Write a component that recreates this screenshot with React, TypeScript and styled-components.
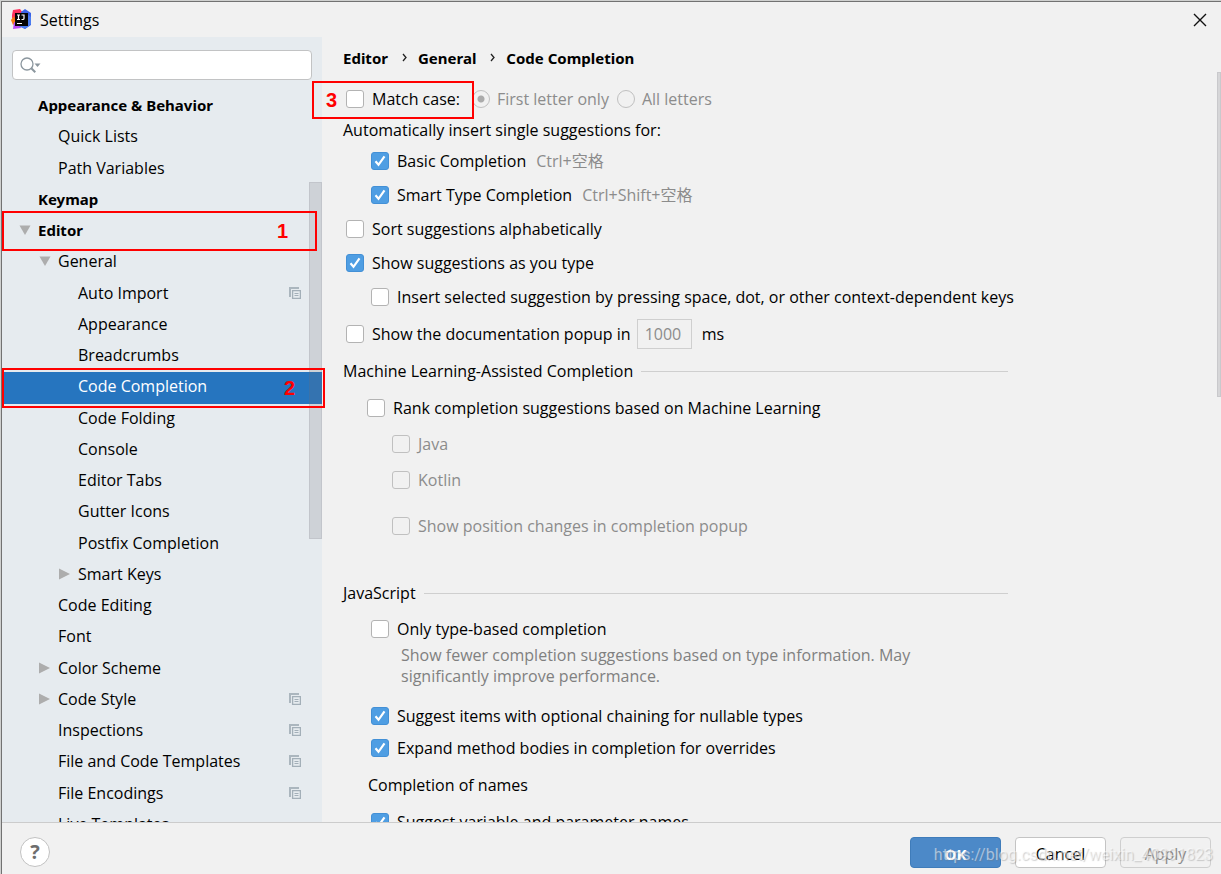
import React, { useId, useState } from "react";
import styled, { createGlobalStyle, css } from "styled-components";

const GlobalStyle = createGlobalStyle`
  * { box-sizing: border-box; }
  body {
    margin: 0;
    background: #cfd0cf;
    color: #000;
    font-family: "Open Sans", "Noto Sans CJK SC", sans-serif;
    font-size: 16px;
    line-height: 20px;
  }
  button, input { font: inherit; color: inherit; }
`;

const strongText = css`
  font-family: "Noto Sans", sans-serif;
  font-size: 15px;
  font-weight: 700;
`;

/* ---------- Window frame ---------- */

const Desktop = styled.div`
  height: 100vh;
  padding: 1px 0 0 1px;
`;

const Window = styled.div`
  position: relative;
  display: flex;
  flex-direction: column;
  height: 100%;
  overflow: hidden;
  border-top: 1px solid #727272;
  border-left: 1px solid #727272;
  background: #f1f1f1;
`;

const TitleBar = styled.header`
  display: flex;
  align-items: center;
  flex: none;
  gap: 8px;
  height: 35px;
  padding: 0 14px 0 9px;
`;

const WindowTitle = styled.h1`
  flex: 1;
  margin: 0;
  font-size: 16px;
  font-weight: 400;
`;

const CloseButton = styled.button`
  display: flex;
  padding: 0;
  border: 0;
  background: none;
`;

const Body = styled.div`
  display: flex;
  flex: 1;
  min-height: 0;
`;

/* ---------- Sidebar ---------- */

const Sidebar = styled.nav`
  position: relative;
  flex: none;
  width: 320px;
  overflow: hidden;
  background: #e6ebef;
`;

const SearchField = styled.label`
  display: flex;
  align-items: center;
  gap: 4px;
  height: 30px;
  margin: 13px 10px 11px;
  padding-left: 7px;
  border: 1px solid #c2c3c4;
  border-radius: 4px;
  background: #fff;
`;

const SearchInput = styled.input`
  flex: 1;
  min-width: 0;
  padding: 0;
  border: 0;
  outline: 0;
  background: none;
`;

const Tree = styled.ul`
  margin: 0;
  padding: 0;
  list-style: none;
`;

const TreeRow = styled.li`
  height: 31px;
  &:nth-child(4n + 2) { height: 32px; }
`;

const TreeButton = styled.button<{ $depth: number; $bold?: boolean; $selected?: boolean }>`
  display: flex;
  align-items: center;
  width: 100%;
  height: 100%;
  padding: 0 21px 4px ${(p) => 17 + p.$depth * 20}px;
  border: 0;
  text-align: left;
  white-space: nowrap;
  background: ${(p) => (p.$selected ? "#2675bf" : "none")};
  color: ${(p) => (p.$selected ? "#fff" : "#000")};
  ${(p) => p.$bold && strongText}
`;

const ArrowSlot = styled.span`
  display: flex;
  flex: none;
  width: 19px;
`;

const TreeLabel = styled.span`
  flex: 1;
`;

const ScrollThumb = styled.div<{ $top: number; $height: number; $width: number }>`
  position: absolute;
  top: ${(p) => p.$top}px;
  right: 0;
  width: ${(p) => p.$width}px;
  height: ${(p) => p.$height}px;
  border: 1px solid rgba(110, 110, 120, 0.12);
  background: rgba(110, 110, 120, 0.2);
`;

/* ---------- Settings page ---------- */

const Page = styled.main`
  position: relative;
  flex: 1;
  min-width: 0;
  overflow: hidden;
  padding-left: 21px;
`;

const Breadcrumbs = styled.ol`
  display: flex;
  align-items: center;
  gap: 10px;
  height: 42px;
  margin: 0 0 3px;
  padding: 0;
  list-style: none;
  ${strongText}
`;

const Crumb = styled.li`
  display: flex;
  align-items: center;
  gap: 14px;
`;

const Form = styled.form`
  max-width: 665px;
`;

const Row = styled.div<{ $indent?: number; $height?: number }>`
  display: flex;
  align-items: center;
  height: ${(p) => p.$height ?? 34}px;
  padding-left: ${(p) => p.$indent ?? 0}px;
  white-space: nowrap;
`;

const Stack = styled.div<{ $indent?: number; $before?: number }>`
  padding-left: ${(p) => p.$indent ?? 0}px;
  padding-top: ${(p) => p.$before ?? 0}px;
`;

const SectionTitle = styled.h2`
  display: flex;
  align-items: center;
  gap: 8px;
  height: 34px;
  margin: 0;
  font-size: 16px;
  font-weight: 400;
  &::after {
    content: "";
    flex: 1;
    height: 1px;
    background: #cfcfcf;
  }
`;

const ChoiceLabel = styled.label<{ $disabled?: boolean }>`
  display: flex;
  align-items: center;
  gap: 8px;
  color: ${(p) => (p.$disabled ? "#8c8c8c" : "#000")};
`;

const BoxFrame = styled.span`
  position: relative;
  display: flex;
  flex: none;
  width: 18px;
  height: 18px;
`;

const boxBase = css`
  appearance: none;
  width: 18px;
  height: 18px;
  margin: 0;
  border: 1px solid #b3b3b3;
`;

const Box = styled.input`
  ${boxBase}
  border-radius: 3px;
  background: #fff;
  &:checked { border-color: #4390d6; background: #4f9ee3; }
  &:disabled { border-color: #c0c0c0; background: #f1f1f1; }
`;

const Tick = styled.svg`
  position: absolute;
  inset: 0;
  pointer-events: none;
`;

const Radio = styled.input`
  ${boxBase}
  border-color: #c0c0c0;
  border-radius: 50%;
  background: #f1f1f1;
  &:checked { background: radial-gradient(circle, #ababab 3px, #f1f1f1 4px); }
`;

const RadioGroup = styled.div`
  display: flex;
  gap: 8px;
  margin-left: 12px;
`;

const RadioLabel = styled(ChoiceLabel)`
  gap: 7px;
`;

const Shortcut = styled.kbd`
  margin-left: 10px;
  color: #8c8c8c;
  font-family: inherit;
`;

const DelayInput = styled.input`
  width: 55px;
  height: 30px;
  margin: 0 10px 0 6px;
  padding: 0 7px;
  border: 1px solid #cfcfcf;
  background: #f1f1f1;
  color: #8c8c8c;
`;

const Hint = styled.p`
  max-width: 560px;
  margin: 0 0 13px;
  padding-left: 30px;
  color: #808080;
  line-height: 21px;
`;

/* ---------- Footer ---------- */

const Footer = styled.footer`
  display: flex;
  align-items: flex-start;
  flex: none;
  gap: 14px;
  height: 52px;
  padding: 14px 10px 0 18px;
  border-top: 1px solid #cccccc;
`;

const HelpButton = styled.button`
  width: 30px;
  height: 30px;
  margin-right: auto;
  padding: 0;
  border: 1px solid #c2c2c2;
  border-radius: 50%;
  background: #fff;
  color: #6e6e6e;
  font-size: 20px;
  font-weight: 700;
`;

const DialogButton = styled.button<{ $primary?: boolean }>`
  width: 91px;
  height: 31px;
  padding: 2px 0 0;
  border: 1px solid #c4c4c4;
  border-radius: 4px;
  background: #fff;
  &:disabled { background: #f1f1f1; color: #8c8c8c; border-color: #cfcfcf; }
  ${(p) => p.$primary && css`
    ${strongText}
    border-color: #3f7cba;
    background: #4c89c8;
    color: #fff;
  `}
`;

/* ---------- Annotations over the window ---------- */

const Callout = styled.div<{ $x: number; $y: number; $w: number; $h: number; $pad: string; $end?: boolean }>`
  position: absolute;
  left: ${(p) => p.$x}px;
  top: ${(p) => p.$y}px;
  width: ${(p) => p.$w}px;
  height: ${(p) => p.$h}px;
  display: flex;
  align-items: center;
  justify-content: ${(p) => (p.$end ? "flex-end" : "flex-start")};
  padding: ${(p) => p.$pad};
  border: 2px solid #ff0000;
  color: #ff0000;
  font: 700 20px/24px "Liberation Sans", sans-serif;
  pointer-events: none;
`;

const Watermark = styled.div`
  position: absolute;
  right: 8px;
  bottom: 9px;
  color: rgba(255, 255, 255, 0.5);
  font: 16px/20px Roboto, sans-serif;
  text-shadow: 1px 1px 1px rgba(120, 120, 120, 0.35);
  pointer-events: none;
`;

/* ---------- Icons ---------- */

const Logo = () => (
  <svg width="21" height="21" viewBox="0 0 21 21" aria-hidden="true">
    <path d="M1 6 2 1l7-1 3 4-8 8-3-3z" fill="#fe315d" />
    <path d="m0 11 3-4 2 7-3 2z" fill="#f97a12" />
    <path d="m3 13 6 3 1 3-8 1z" fill="#b74af7" />
    <path d="m10 3 4-3 6 4v12l-6 4-6-3z" fill="#3b63e8" />
    <path d="m16 5 4 3v7l-6 5-6-3 7-4z" fill="#4a7df0" />
    <path d="M4 4h13v13H4z" fill="#050505" />
    <path d="M6 6h3M7.500 6v4.500M6 10.500h3M10.500 6H13v3.500q0 1-1.200 1H10.500" fill="none" stroke="#fff" strokeWidth="1.200" />
    <path d="M6 14.500h5" stroke="#fff" strokeWidth="1" />
  </svg>
);

const CloseIcon = () => (
  <svg width="14" height="14" viewBox="0 0 14 14" aria-hidden="true">
    <path d="m1 1 12 12M13 1 1 13" stroke="#111" strokeWidth="1.400" />
  </svg>
);

const SearchIcon = () => (
  <svg width="21" height="18" viewBox="0 0 21 18" aria-hidden="true">
    <circle cx="7" cy="8" r="6" fill="none" stroke="#8b969e" strokeWidth="1.300" />
    <path d="m11.300 12.300 4 4" stroke="#8b969e" strokeWidth="2" />
    <path d="M14.500 7.500h6l-3 3.500z" fill="#8b969e" />
  </svg>
);

const Arrow = ({ open }: { open: boolean }) => (
  <svg width="12" height="12" viewBox="0 0 12 12" aria-hidden="true">
    <path d={open ? "M.5 1.500h11L6 11z" : "M0 .5v11L11 6z"} fill="#adadad" />
  </svg>
);

const ProjectIcon = () => (
  <svg width="12" height="12" viewBox="0 0 12 12" aria-hidden="true">
    <path d="M0 0h10v2H2v8H0z" fill="#abb6be" />
    <path d="M3.600 3.600h7.800v7.800H3.600z" fill="#e6ebef" stroke="#a3afb8" strokeWidth="1.300" />
    <path d="M5.500 6.500h4M5.500 8.500h4" stroke="#a3afb8" />
  </svg>
);

const Chevron = () => (
  <svg width="6" height="10" viewBox="0 0 6 10" aria-hidden="true">
    <path d="m1 1 3 3.500L1 8" fill="none" stroke="#222" strokeWidth="1.300" />
  </svg>
);

/* ---------- Controls ---------- */

type CheckProps = { label: string; checked?: boolean; disabled?: boolean };

const Check = ({ label, checked = false, disabled }: CheckProps) => {
  const id = useId();
  const [on, setOn] = useState(checked);
  return (
    <ChoiceLabel htmlFor={id} $disabled={disabled}>
      <BoxFrame>
        <Box id={id} type="checkbox" checked={on} disabled={disabled} onChange={() => setOn(!on)} />
        {on && (
          <Tick viewBox="0 0 18 18" aria-hidden="true">
            <path d="m4.500 9.300 3 3.500 6-8.500" fill="none" stroke="#fff" strokeWidth="2.200" />
          </Tick>
        )}
      </BoxFrame>
      {label}
    </ChoiceLabel>
  );
};

type Node = { label: string; depth: number; bold?: boolean; open?: boolean; project?: boolean; selected?: boolean };

const nodes: Node[] = [
  { label: "Appearance & Behavior", depth: 0, bold: true },
  { label: "Quick Lists", depth: 1 },
  { label: "Path Variables", depth: 1 },
  { label: "Keymap", depth: 0, bold: true },
  { label: "Editor", depth: 0, bold: true, open: true },
  { label: "General", depth: 1, open: true },
  { label: "Auto Import", depth: 2, project: true },
  { label: "Appearance", depth: 2 },
  { label: "Breadcrumbs", depth: 2 },
  { label: "Code Completion", depth: 2, selected: true },
  { label: "Code Folding", depth: 2 },
  { label: "Console", depth: 2 },
  { label: "Editor Tabs", depth: 2 },
  { label: "Gutter Icons", depth: 2 },
  { label: "Postfix Completion", depth: 2 },
  { label: "Smart Keys", depth: 2, open: false },
  { label: "Code Editing", depth: 1 },
  { label: "Font", depth: 1 },
  { label: "Color Scheme", depth: 1, open: false },
  { label: "Code Style", depth: 1, open: false, project: true },
  { label: "Inspections", depth: 1, project: true },
  { label: "File and Code Templates", depth: 1, project: true },
  { label: "File Encodings", depth: 1, project: true },
  { label: "Live Templates", depth: 1 },
];

export default function App() {
  return (
    <Desktop>
      <GlobalStyle />
      <Window>
        <TitleBar>
          <Logo />
          <WindowTitle>Settings</WindowTitle>
          <CloseButton type="button" aria-label="Close">
            <CloseIcon />
          </CloseButton>
        </TitleBar>

        <Body>
          <Sidebar aria-label="Settings categories">
            <SearchField>
              <SearchIcon />
              <SearchInput type="text" aria-label="Search settings" />
            </SearchField>
            <Tree>
              {nodes.map((n) => (
                <TreeRow key={n.label}>
                  <TreeButton type="button" $depth={n.depth} $bold={n.bold} $selected={n.selected}>
                    <ArrowSlot>{n.open !== undefined && <Arrow open={n.open} />}</ArrowSlot>
                    <TreeLabel>{n.label}</TreeLabel>
                    {n.project && <ProjectIcon />}
                  </TreeButton>
                </TreeRow>
              ))}
            </Tree>
            <ScrollThumb $top={145} $height={357} $width={13} />
          </Sidebar>

          <Page>
            <Breadcrumbs>
              <Crumb>Editor <Chevron /></Crumb>
              <Crumb>General <Chevron /></Crumb>
              <Crumb>Code Completion</Crumb>
            </Breadcrumbs>
            <Form>
              <Row $indent={3}>
                <Check label="Match case:" />
                <RadioGroup>
                  <RadioLabel $disabled>
                    <Radio type="radio" name="case" defaultChecked disabled />
                    First letter only
                  </RadioLabel>
                  <RadioLabel $disabled>
                    <Radio type="radio" name="case" disabled />
                    All letters
                  </RadioLabel>
                </RadioGroup>
              </Row>
              <Row $height={28}>Automatically insert single suggestions for:</Row>
              <Row $indent={28}>
                <Check label="Basic Completion" checked />
                <Shortcut>Ctrl+空格</Shortcut>
              </Row>
              <Row $indent={28}>
                <Check label="Smart Type Completion" checked />
                <Shortcut>Ctrl+Shift+空格</Shortcut>
              </Row>
              <Row $indent={3}><Check label="Sort suggestions alphabetically" /></Row>
              <Row $indent={3}><Check label="Show suggestions as you type" checked /></Row>
              <Row $indent={28}>
                <Check label="Insert selected suggestion by pressing space, dot, or other context-dependent keys" />
              </Row>
              <Row $indent={3} $height={40}>
                <Check label="Show the documentation popup in" />
                <DelayInput type="text" aria-label="Delay in milliseconds" defaultValue="1000" disabled />
                ms
              </Row>

              <SectionTitle>Machine Learning-Assisted Completion</SectionTitle>
              <Stack $indent={24} $before={2}>
                <Row $height={36}><Check label="Rank completion suggestions based on Machine Learning" /></Row>
                <Stack $indent={25}>
                  <Row $height={36}><Check label="Java" disabled /></Row>
                  <Row $height={36}><Check label="Kotlin" disabled /></Row>
                </Stack>
                <Stack $indent={25} $before={10}>
                  <Row $height={36}><Check label="Show position changes in completion popup" disabled /></Row>
                </Stack>
              </Stack>

              <Stack $before={32}>
                <SectionTitle>JavaScript</SectionTitle>
              </Stack>
              <Stack $indent={28} $before={3}>
                <Row $height={32}><Check label="Only type-based completion" /></Row>
                <Hint>
                  Show fewer completion suggestions based on type information. May significantly improve performance.
                </Hint>
                <Row $height={32}><Check label="Suggest items with optional chaining for nullable types" checked /></Row>
                <Row $height={32}><Check label="Expand method bodies in completion for overrides" checked /></Row>
              </Stack>
              <Row $indent={25} $height={42}>Completion of names</Row>
              <Row $indent={28} $height={32}><Check label="Suggest variable and parameter names" checked /></Row>
            </Form>
            <ScrollThumb $top={35} $height={325} $width={4} />
          </Page>
        </Body>

        <Footer>
          <HelpButton type="button" aria-label="Help">?</HelpButton>
          <DialogButton type="button" $primary>OK</DialogButton>
          <DialogButton type="button">Cancel</DialogButton>
          <DialogButton type="button" disabled>Apply</DialogButton>
        </Footer>

        <Callout $x={0} $y={209} $w={315} $h={40} $pad="0 27px 0 0" $end>1</Callout>
        <Callout $x={0} $y={366} $w={323} $h={40} $pad="0 28px 0 0" $end>2</Callout>
        <Callout $x={310} $y={79} $w={162} $h={38} $pad="0 0 0 12px">3</Callout>
        <Watermark>https://blog.csdn.net/weixin_40991823</Watermark>
      </Window>
    </Desktop>
  );
}
